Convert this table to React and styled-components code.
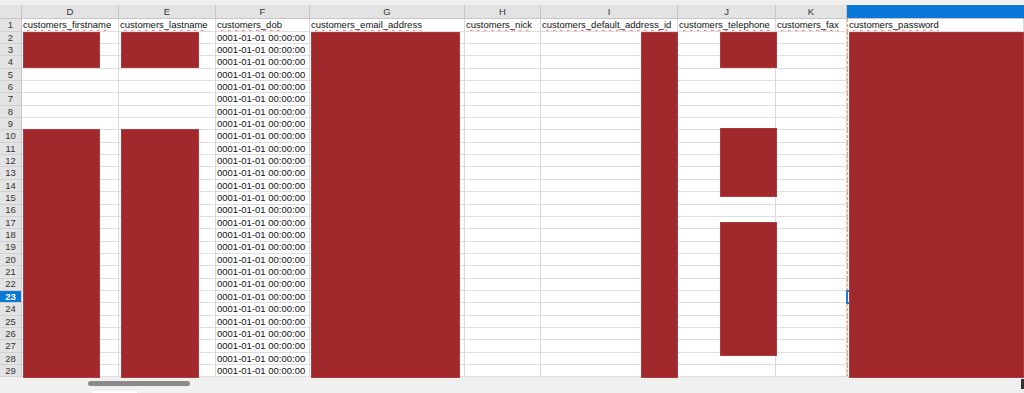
import React from "react";
import styled, { createGlobalStyle } from "styled-components";

const Global = createGlobalStyle`
  html, body { margin: 0; padding: 0; background: #ffffff; overflow: hidden; }
  body { font-family: "Liberation Sans", Arial, sans-serif; }
`;

const Page = styled.div`
  position: relative;
  width: 1024px;
  height: 393px;
  display: flex;
  flex-direction: column;
  background: #efefef;
  overflow: hidden;
`;

const TopStrip = styled.div`
  height: 5px;
  flex: none;
  background: #efefef;
`;

const Sheet = styled.div`
  flex: none;
  display: grid;
  grid-template-columns: 22px 97px 97px 94px 155px 76px 137px 98px 71px 1fr;
  grid-template-rows: 14px 12.7px repeat(28, 12.357px);
  background: #ffffff;
  font-size: 9.5px;
  color: #111;
`;

const ColHead = styled.div`
  background: ${(p) => (p.$selected ? "#0a78d7" : "#e3e3e3")};
  color: ${(p) => (p.$selected ? "#fff" : "#333")};
  border-right: 1px solid ${(p) => (p.$selected ? "#0a78d7" : "#c6c6c6")};
  border-bottom: 1px solid #c6c6c6;
  display: flex;
  align-items: center;
  justify-content: center;
  box-sizing: border-box;
  line-height: 1;
  padding-top: 1px;
`;

const RowHead = styled.div`
  background: ${(p) => (p.$selected ? "#0a78d7" : "#e3e3e3")};
  color: ${(p) => (p.$selected ? "#fff" : "#333")};
  font-weight: ${(p) => (p.$selected ? 700 : 400)};
  border-right: 1px solid #c6c6c6;
  border-bottom: 1px solid #d0d0d0;
  display: flex;
  align-items: center;
  justify-content: center;
  box-sizing: border-box;
  line-height: 1;
`;

const Cell = styled.div`
  border-right: 1px solid #d9d9d9;
  border-bottom: 1px solid #dedede;
  border-left: ${(p) => (p.$pageBreak ? "1px dashed #e4a56a" : "none")};
  box-sizing: border-box;
  display: flex;
  align-items: center;
  padding-left: 1px;
  white-space: nowrap;
  overflow: hidden;
  line-height: 1;
`;

const FieldName = styled.span`
  text-decoration-line: underline;
  text-decoration-style: wavy;
  text-decoration-color: #ee6b6b;
  text-decoration-thickness: 1px;
  text-underline-offset: 1px;
  color: #111;
`;

const BottomBar = styled.div`
  flex: 1;
  background: #f0f0f0;
  position: relative;
  display: flex;
  align-items: flex-start;
`;

const ScrollThumb = styled.div`
  margin-left: 88px;
  margin-top: 4px;
  width: 102px;
  height: 5px;
  border-radius: 3px;
  background: #8b8b8b;
`;

const SheetTab = styled.div`
  position: absolute;
  left: 92px;
  bottom: 0;
  width: 45px;
  height: 2px;
  background: #ffffff;
`;

const CornerMark = styled.div`
  position: absolute;
  right: 0;
  top: 2px;
  width: 3px;
  height: 10px;
  background: #333;
`;

const Redaction = styled.div`
  position: absolute;
  background: #a1282b;
  box-shadow: inset 0 0 0 1px #ad3a3c;
`;

const CellCursor = styled.div`
  position: absolute;
  left: 846px;
  top: 290px;
  width: 20px;
  height: 14px;
  border: 2px solid #1f7ad8;
  box-sizing: border-box;
`;

const letters = ["D", "E", "F", "G", "H", "I", "J", "K", ""];
const fields = [
  "customers_firstname",
  "customers_lastname",
  "customers_dob",
  "customers_email_address",
  "customers_nick",
  "customers_default_address_id",
  "customers_telephone",
  "customers_fax",
  "customers_password",
];

const redactions = [
  [23, 32, 100, 68],
  [23, 129, 100, 378],
  [121, 32, 199, 68],
  [121, 129, 199, 378],
  [311, 32, 460, 378],
  [641, 32, 678, 378],
  [720, 32, 777, 68],
  [720, 128, 777, 197],
  [720, 222, 777, 356],
  [849, 32, 1024, 378],
];

const rows = Array.from({ length: 28 }, (_, i) => i + 2);

export default function App() {
  return (
    <>
      <Global />
      <Page>
        <TopStrip />
        <Sheet>
          <ColHead />
          {letters.map((l, i) => (
            <ColHead key={"h" + i} $selected={i === 8}>
              {l}
            </ColHead>
          ))}
          <RowHead>1</RowHead>
          {fields.map((f, i) => (
            <Cell key={"f" + i} $pageBreak={i === 8}>
              <FieldName>{f}</FieldName>
            </Cell>
          ))}
          {rows.map((r) => (
            <React.Fragment key={r}>
              <RowHead $selected={r === 23}>{r}</RowHead>
              {fields.map((f, i) => (
                <Cell key={i} $pageBreak={i === 8}>
                  {i === 2 ? "0001-01-01 00:00:00" : ""}
                </Cell>
              ))}
            </React.Fragment>
          ))}
        </Sheet>
        <BottomBar>
          <ScrollThumb />
          <SheetTab />
          <CornerMark />
        </BottomBar>
        <CellCursor />
        {redactions.map(([x1, y1, x2, y2], i) => (
          <Redaction
            key={i}
            style={{ left: x1, top: y1, width: x2 - x1, height: y2 - y1 }}
          />
        ))}
      </Page>
    </>
  );
}
